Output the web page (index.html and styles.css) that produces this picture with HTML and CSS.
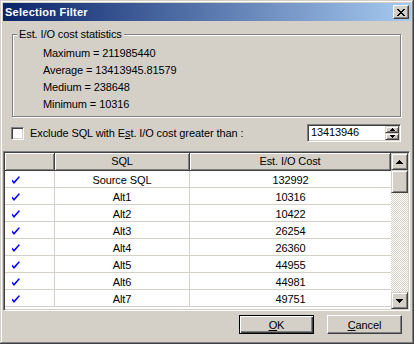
FILE: index.html
```html
<!DOCTYPE html>
<html>
<head>
<meta charset="utf-8">
<title>Selection Filter</title>
<link rel="stylesheet" href="styles.css">
</head>
<body>
<div class="window">
  <div class="titlebar">
    <span class="title">Selection Filter</span>
    <button class="close" type="button" aria-label="Close">
      <svg width="8" height="7" viewBox="0 0 8 7" shape-rendering="crispEdges"><path fill="#000" d="M0 0h2v1H0z M6 0h2v1H6z M1 1h2v1H1z M5 1h2v1H5z M2 2h4v1H2z M3 3h2v1H3z M2 4h4v1H2z M1 5h2v1H1z M5 5h2v1H5z M0 6h2v1H0z M6 6h2v1H6z"/></svg>
    </button>
  </div>
  <div class="body">
    <fieldset class="group">
      <legend>Est. I/O cost statistics</legend>
      <div class="stats">
        <div class="stat">Maximum = 211985440</div>
        <div class="stat">Average = 13413945.81579</div>
        <div class="stat">Medium = 238648</div>
        <div class="stat">Minimum = 10316</div>
      </div>
    </fieldset>

    <div class="filter-row">
      <span class="checkbox"></span>
      <span class="filter-label">Exclude SQL with E<u>s</u>t. I/O cost greater than :</span>
      <div class="spin">
        <span class="spin-value">13413946</span>
        <div class="spin-buttons">
          <span class="spin-btn"><svg width="5" height="3" viewBox="0 0 5 3" shape-rendering="crispEdges"><path d="M2 0h1v1H2z M1 1h3v1H1z M0 2h5v1H0z"/></svg></span>
          <span class="spin-btn"><svg width="5" height="3" viewBox="0 0 5 3" shape-rendering="crispEdges"><path d="M0 0h5v1H0z M1 1h3v1H1z M2 2h1v1H2z"/></svg></span>
        </div>
      </div>
    </div>

    <div class="grid">
      <div class="table">
        <div class="row head">
          <div class="cell c0"></div>
          <div class="cell c1">SQL</div>
          <div class="cell c2">Est. I/O Cost</div>
        </div>
        <div class="row"><div class="cell c0 chk"><svg width="8" height="8" viewBox="0 0 8 8"><polygon fill="#0000ff" points="0,3.5 2,5.5 7,0 7.8,1.2 2,8 0,5.5"/></svg></div><div class="cell c1">Source SQL</div><div class="cell c2">132992</div></div>
        <div class="row"><div class="cell c0 chk"><svg width="8" height="8" viewBox="0 0 8 8"><polygon fill="#0000ff" points="0,3.5 2,5.5 7,0 7.8,1.2 2,8 0,5.5"/></svg></div><div class="cell c1">Alt1</div><div class="cell c2">10316</div></div>
        <div class="row"><div class="cell c0 chk"><svg width="8" height="8" viewBox="0 0 8 8"><polygon fill="#0000ff" points="0,3.5 2,5.5 7,0 7.8,1.2 2,8 0,5.5"/></svg></div><div class="cell c1">Alt2</div><div class="cell c2">10422</div></div>
        <div class="row"><div class="cell c0 chk"><svg width="8" height="8" viewBox="0 0 8 8"><polygon fill="#0000ff" points="0,3.5 2,5.5 7,0 7.8,1.2 2,8 0,5.5"/></svg></div><div class="cell c1">Alt3</div><div class="cell c2">26254</div></div>
        <div class="row"><div class="cell c0 chk"><svg width="8" height="8" viewBox="0 0 8 8"><polygon fill="#0000ff" points="0,3.5 2,5.5 7,0 7.8,1.2 2,8 0,5.5"/></svg></div><div class="cell c1">Alt4</div><div class="cell c2">26360</div></div>
        <div class="row"><div class="cell c0 chk"><svg width="8" height="8" viewBox="0 0 8 8"><polygon fill="#0000ff" points="0,3.5 2,5.5 7,0 7.8,1.2 2,8 0,5.5"/></svg></div><div class="cell c1">Alt5</div><div class="cell c2">44955</div></div>
        <div class="row"><div class="cell c0 chk"><svg width="8" height="8" viewBox="0 0 8 8"><polygon fill="#0000ff" points="0,3.5 2,5.5 7,0 7.8,1.2 2,8 0,5.5"/></svg></div><div class="cell c1">Alt6</div><div class="cell c2">44981</div></div>
        <div class="row"><div class="cell c0 chk"><svg width="8" height="8" viewBox="0 0 8 8"><polygon fill="#0000ff" points="0,3.5 2,5.5 7,0 7.8,1.2 2,8 0,5.5"/></svg></div><div class="cell c1">Alt7</div><div class="cell c2">49751</div></div>
      </div>
      <div class="scrollbar">
        <span class="sb-btn"><svg width="7" height="4" viewBox="0 0 7 4" shape-rendering="crispEdges"><path d="M3 0h1v1H3z M2 1h3v1H2z M1 2h5v1H1z M0 3h7v1H0z"/></svg></span>
        <span class="thumb"></span>
        <span class="track"></span>
        <span class="sb-btn"><svg width="7" height="4" viewBox="0 0 7 4" shape-rendering="crispEdges"><path d="M0 0h7v1H0z M1 1h5v1H1z M2 2h3v1H2z M3 3h1v1H3z"/></svg></span>
      </div>
    </div>

    <div class="buttons">
      <button class="btn default" type="button"><u>O</u>K</button>
      <button class="btn" type="button"><u>C</u>ancel</button>
    </div>
  </div>
</div>
</body>
</html>
```
FILE: styles.css
```css
* { box-sizing: border-box; }

body {
  margin: 0;
  background: #d4d0c8;
  font: 11px "Liberation Sans", Arial, sans-serif;
  letter-spacing: -0.1px;
  color: #000;
}

.window {
  width: 414px;
  height: 344px;
  padding: 3px;
  background: #d4d0c8;
  box-shadow: inset -1px -1px #404040, inset 1px 1px #d4d0c8,
              inset -2px -2px #808080, inset 2px 2px #fff;
  display: flex;
  flex-direction: column;
}

.titlebar {
  height: 18px;
  flex: none;
  display: flex;
  align-items: flex-start;
  padding-left: 2px;
  background: linear-gradient(to right, #0a246a, #a6caf0);
}

.title {
  flex: 1;
  color: #fff;
  font-weight: bold;
  letter-spacing: 0.25px;
  line-height: 18px;
}

.close {
  appearance: none;
  width: 16px;
  height: 14px;
  margin: 2px 2px 0 0;
  padding: 0;
  background: #d4d0c8;
  border: 1px solid;
  border-color: #fff #404040 #404040 #fff;
  box-shadow: inset -1px -1px #808080;
  display: flex;
  align-items: center;
  justify-content: center;
}

.body {
  flex: 1;
  display: flex;
  flex-direction: column;
}

.group {
  margin: 7px 10px 0 9px;
  padding: 0;
  min-width: 0;
  border: 1px solid #808080;
  box-shadow: inset 1px 1px #fff, 1px 1px #fff;
}

.group legend {
  margin-left: 4px;
  padding: 0 2px;
  line-height: 12px;
  background: #d4d0c8;
}

.stats {
  padding: 5px 0 3px 30px;
}

.stat {
  line-height: 17px;
}

.filter-row {
  display: flex;
  align-items: center;
  height: 18px;
  margin: 7px 10px 0 8px;
}

.checkbox {
  flex: none;
  width: 13px;
  height: 13px;
  background: #fff;
  border: 1px solid;
  border-color: #808080 #fff #fff #808080;
  box-shadow: inset 1px 1px #404040, inset -1px -1px #d4d0c8;
}

.filter-label {
  flex: 1;
  margin-left: 6px;
}

.spin {
  flex: none;
  width: 94px;
  height: 18px;
  display: flex;
  padding: 1px;
  background: #fff;
  border: 1px solid;
  border-color: #808080 #fff #fff #808080;
  box-shadow: inset 1px 1px #404040, inset -1px -1px #d4d0c8;
}

.spin-value {
  flex: 1;
  padding-left: 2px;
  line-height: 12px;
}

.spin-buttons {
  width: 14px;
  display: flex;
  flex-direction: column;
}

.spin-btn, .sb-btn, .thumb {
  background: #d4d0c8;
  border: 1px solid;
  border-color: #d4d0c8 #404040 #404040 #d4d0c8;
  box-shadow: inset 1px 1px #fff, inset -1px -1px #808080;
  display: flex;
  align-items: center;
  justify-content: center;
}

.spin-btn { flex: 1; }

.grid {
  flex: none;
  height: 160px;
  margin: 9px 1px 0 0;
  padding: 1px;
  display: flex;
  border: 1px solid;
  border-color: #808080 #fff #fff #808080;
  box-shadow: inset 1px 1px #404040, inset -1px -1px #d4d0c8;
}

.table {
  flex: 1;
  background: #fff;
  overflow: hidden;
}

.row {
  display: flex;
  height: 17px;
  border-bottom: 1px solid #d4d0c8;
}

.cell {
  padding-top: 3px;
  line-height: 13px;
  text-align: center;
  border-right: 1px solid #d4d0c8;
}

.c0 { width: 50px; flex: none; }
.c1 { width: 135px; flex: none; }
.c2 { flex: 1; border-right: none; }

.chk {
  padding: 5px 0 0 7px;
}

.chk svg { display: block; }

.row.head {
  height: 18px;
  border-bottom-color: #404040;
}

.head .cell {
  padding-top: 0;
  line-height: 17px;
  background: #d4d0c8;
  border-right: 1px solid #404040;
  box-shadow: inset 1px 1px #fff, inset -1px -1px #808080;
}

.scrollbar {
  flex: none;
  width: 17px;
  display: flex;
  flex-direction: column;
  background-color: #d4d0c8;
  background-image: conic-gradient(#fff 0 25%, #d4d0c8 0 50%, #fff 0 75%, #d4d0c8 0);
  background-size: 2px 2px;
}

.sb-btn { height: 17px; flex: none; }
.thumb { height: 23px; flex: none; }
.track { flex: 1; }

.buttons {
  display: flex;
  justify-content: flex-end;
  gap: 13px;
  margin: 4px 9px 0 0;
}

.btn {
  appearance: none;
  width: 75px;
  height: 19px;
  padding: 0;
  font: inherit;
  letter-spacing: inherit;
  color: #000;
  background: #d4d0c8;
  border: 1px solid;
  border-color: #fff #404040 #404040 #fff;
  box-shadow: inset -1px -1px #808080;
}

.btn.default {
  border: 1px solid #000;
  box-shadow: inset 1px 1px #fff, inset -1px -1px #404040, inset -2px -2px #808080;
}
```
